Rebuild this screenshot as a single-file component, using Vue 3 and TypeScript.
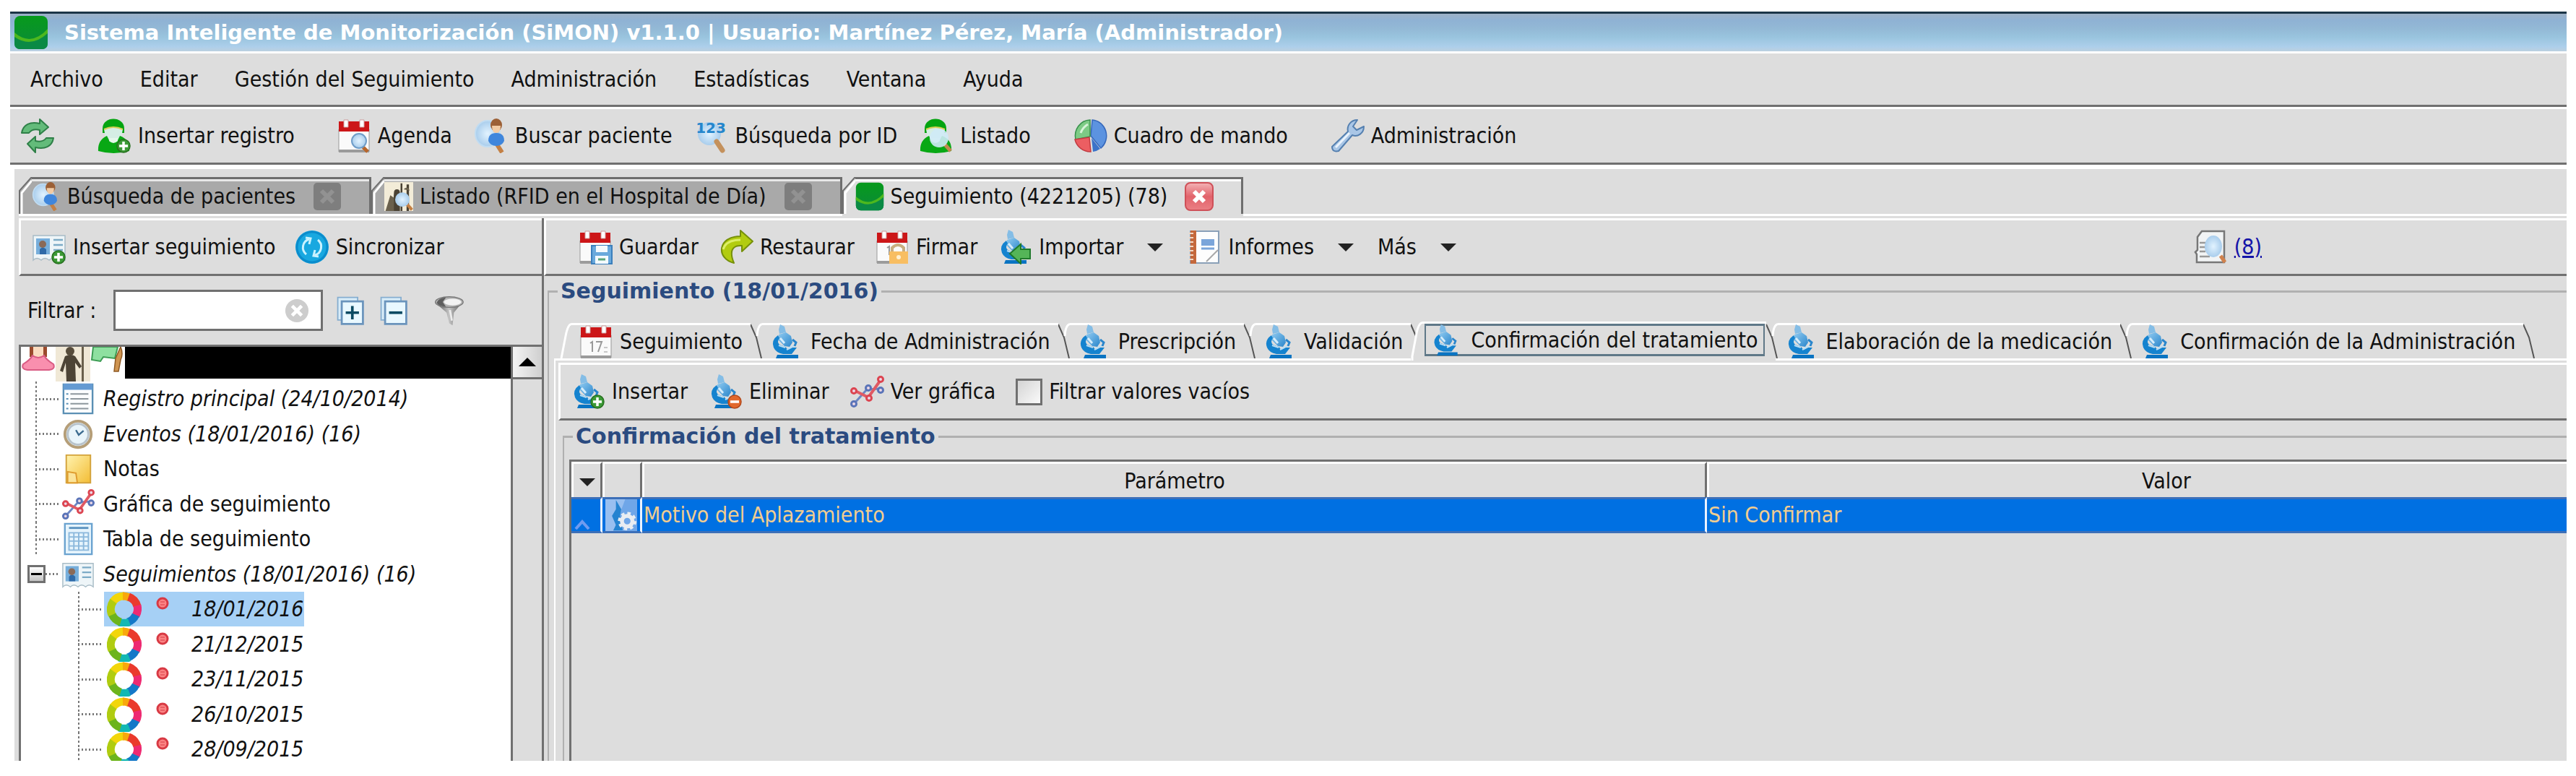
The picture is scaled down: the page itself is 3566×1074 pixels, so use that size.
<script setup lang="ts">
import { ref } from 'vue'

interface Action {
  label?: string
  title?: string
  icons?: string[]
  menu?: boolean
  group?: boolean
}

const menus = ['Archivo', 'Editar', 'Gestión del Seguimiento', 'Administración', 'Estadísticas', 'Ventana', 'Ayuda']

const mainActions: Action[] = [
  { title: 'Actualizar', icons: ['refresh'] },
  { label: 'Insertar registro', icons: ['person', 'badge-plus'], group: true },
  { label: 'Agenda', icons: ['calendar', 'badge-lens'], group: true },
  { label: 'Buscar paciente', icons: ['find-user'] },
  { label: 'Búsqueda por ID', icons: ['find-id'] },
  { label: 'Listado', icons: ['person', 'badge-lens-big'] },
  { label: 'Cuadro de mando', icons: ['pie'], group: true },
  { label: 'Administración', icons: ['tools'], group: true },
]

const windowTabs = [
  { label: 'Búsqueda de pacientes', icon: 'find-user', active: false },
  { label: 'Listado (RFID en el Hospital de Día)', icon: 'people', active: false },
  { label: 'Seguimiento (4221205) (78)', icon: 'logo', active: true },
]

const followActions: Action[] = [
  { label: 'Guardar', icons: ['calendar', 'badge-disk'] },
  { label: 'Restaurar', icons: ['restore'] },
  { label: 'Firmar', icons: ['calendar', 'badge-sign'] },
  { label: 'Importar', icons: ['microscope', 'badge-import'], menu: true },
  { label: 'Informes', icons: ['report'], menu: true },
  { label: 'Más', menu: true },
]

const stepTabs = [
  { label: 'Seguimiento', icons: ['calendar', 'badge-day'] },
  { label: 'Fecha de Administración', icons: ['microscope'] },
  { label: 'Prescripción', icons: ['microscope'] },
  { label: 'Validación', icons: ['microscope'] },
  { label: 'Confirmación del tratamiento', icons: ['microscope'] },
  { label: 'Elaboración de la medicación', icons: ['microscope'] },
  { label: 'Confirmación de la Administración', icons: ['microscope'] },
]
const activeStep = 4

const treeItems = [
  { label: 'Registro principal (24/10/2014)', icon: 'list', italic: true },
  { label: 'Eventos (18/01/2016) (16)', icon: 'clock', italic: true },
  { label: 'Notas', icon: 'note', italic: false },
  { label: 'Gráfica de seguimiento', icon: 'chart', italic: false },
  { label: 'Tabla de seguimiento', icon: 'sheet', italic: false },
]
const dates = ['18/01/2016', '21/12/2015', '23/11/2015', '26/10/2015', '28/09/2015']
const selectedDate = ref(dates[0])

const filterText = ref('')
const hideEmpty = ref(false)
</script>

<template>
  <svg class="sprite" aria-hidden="true">
    <defs>
      <linearGradient id="g-logo" x1="0" y1="0" x2="0" y2="1">
        <stop offset="0" stop-color="#079a1c" /><stop offset="1" stop-color="#0b8a3a" />
      </linearGradient>
      <linearGradient id="g-scope" x1="0" y1="0" x2="1" y2="1">
        <stop offset="0" stop-color="#8fcaf0" /><stop offset="1" stop-color="#2a86cc" />
      </linearGradient>
      <linearGradient id="g-note" x1="0" y1="0" x2="1" y2="1">
        <stop offset="0" stop-color="#fff3b0" /><stop offset="1" stop-color="#f3bd35" />
      </linearGradient>
      <linearGradient id="g-funnel" x1="0" y1="0" x2="1" y2="0">
        <stop offset="0" stop-color="#4a4a4a" /><stop offset=".5" stop-color="#c4c4c4" /><stop offset="1" stop-color="#5c5c5c" />
      </linearGradient>
      <linearGradient id="g-close" x1="0" y1="0" x2="0" y2="1">
        <stop offset="0" stop-color="#f3b3b6" /><stop offset=".5" stop-color="#e2636b" /><stop offset="1" stop-color="#ea7f84" />
      </linearGradient>
      <radialGradient id="g-lens"><stop offset="0" stop-color="#e2f3ff" /><stop offset="1" stop-color="#a9cdec" /></radialGradient>
    </defs>

    <symbol id="logo" viewBox="0 0 48 48">
      <rect x="1" y="1" width="46" height="46" rx="8" fill="url(#g-logo)" />
      <path d="M1 26Q24 44 47 20V39q0 8-8 8H9q-8 0-8-8z" fill="#0a8a45" />
      <path d="M1 24Q24 44 47 19V25Q24 46 1 30z" fill="#4db81e" />
    </symbol>
    <symbol id="refresh" viewBox="0 0 48 48">
      <g fill="#63bb7a" stroke="#2f8048" stroke-width="2" stroke-linejoin="round">
        <path d="M2 20C4 8 14 4 27 7V1l12 11-12 10v-6c-8-2-12 0-15 4z" />
        <path d="M46 27C44 39 34 43 21 40v7L10 35l11-10v6c8 2 12 0 15-4z" />
      </g>
    </symbol>
    <symbol id="person" viewBox="0 0 48 48">
      <path d="M8 14C8-4 38-4 38 14v6H8z" fill="#04a410" />
      <path d="M10 15q13-5 26 0l-2 10q-4 7-11 7t-11-7z" fill="#d5eee4" />
      <path d="M10 15q13-6 26 0" fill="none" stroke="#d8cf55" stroke-width="2" />
      <path d="M2 45Q1 30 14 24l4 8h10l4-8q14 5 13 21-22 6-43 0z" fill="#08a814" />
      <path d="M17 27h12v4q-6 6-12 0z" fill="#e4f7ea" />
    </symbol>
    <symbol id="badge-plus" viewBox="0 0 48 48">
      <circle cx="37" cy="38" r="9" fill="#3c9a36" stroke="#27701f" stroke-width="1.5" />
      <path d="M31 38h12M37 32v12" stroke="#fff" stroke-width="3.5" />
    </symbol>
    <symbol id="badge-minus" viewBox="0 0 48 48">
      <circle cx="37" cy="38" r="9" fill="#e2682c" stroke="#b3481a" stroke-width="1.5" />
      <path d="M31 38h12" stroke="#fff" stroke-width="3.5" />
    </symbol>
    <symbol id="badge-import" viewBox="0 0 48 48">
      <path d="M17 33l15-13v7h13v13H32v7z" fill="#55b558" stroke="#1f7a2b" stroke-width="2" />
    </symbol>
    <symbol id="badge-lens" viewBox="0 0 48 48">
      <path d="M35 38l8 8" stroke="#b8672c" stroke-width="5" />
      <circle cx="31" cy="31" r="10" fill="url(#g-lens)" stroke="#6f9dc8" stroke-width="2" />
    </symbol>
    <symbol id="badge-lens-big" viewBox="0 0 48 48">
      <path d="M36 36l8 9" stroke="#c08a50" stroke-width="5" />
      <circle cx="28" cy="27" r="13" fill="#cfeaf6" opacity=".9" />
    </symbol>
    <symbol id="calendar" viewBox="0 0 48 48">
      <path d="M3 15h42v31H3z" fill="#fafafa" stroke="#999" stroke-width="1" />
      <path d="M3 43h42v4H3z" fill="#9b9b9b" />
      <path d="M3 4h42v14H3z" fill="#cc1618" />
      <path d="M10 2h6v10h-6zM32 2h6v10h-6z" fill="#fff" stroke="#c99" stroke-width="1" />
    </symbol>
    <symbol id="badge-day" viewBox="0 0 48 48">
      <path d="M16 26l3-2v14M24 24h8l-5 14" fill="none" stroke="#999" stroke-width="2" />
      <path d="M35 32h5M35 38h5" stroke="#c8c8c8" stroke-width="2" />
    </symbol>
    <symbol id="badge-disk" viewBox="0 0 48 48">
      <path d="M19 22h28v25H19z" fill="#69a9dc" stroke="#3b7fbc" stroke-width="2" />
      <path d="M25 22h16v9H25zM24 36h18v11H24z" fill="#f4fafd" />
      <path d="M28 41h10" stroke="#5aa67c" stroke-width="3" />
    </symbol>
    <symbol id="badge-sign" viewBox="0 0 48 48">
      <path d="M17 25l3-2v12" fill="none" stroke="#999" stroke-width="2" />
      <path d="M24 30v-5q8-8 16 0v5" fill="none" stroke="#c9ae80" stroke-width="4" />
      <path d="M20 30h26v17H20z" fill="#f8be62" />
      <circle cx="33" cy="38" r="3" fill="#fff0d0" />
    </symbol>
    <symbol id="find-user" viewBox="0 0 48 48">
      <ellipse cx="19" cy="21" rx="17" ry="18" fill="url(#g-lens)" stroke="#c0dcf2" stroke-width="2" />
      <path d="M32 36l7 11" stroke="#c48044" stroke-width="6" />
      <ellipse cx="31" cy="9" rx="8" ry="9" fill="#9c6036" />
      <path d="M25 10h12q0 10-6 10t-6-10z" fill="#f2cba4" />
      <path d="M20 31q0-11 11-11t11 11q-3 7-11 7t-11-7z" fill="#3f86dc" />
    </symbol>
    <symbol id="find-id" viewBox="0 0 48 48">
      <circle cx="21" cy="21" r="16" fill="url(#g-lens)" />
      <path d="M31 32l8 12" stroke="#c4915c" stroke-width="7" stroke-linecap="round" />
    </symbol>
    <symbol id="pie" viewBox="0 0 48 48">
      <path d="M27 2a21 22 0 0 1 12 39L25 24z" fill="#5c93e0" stroke="#3668bb" stroke-width="1.5" />
      <path d="M24 25V2A21 22 0 0 0 4 29z" fill="#7dcb85" stroke="#36904a" stroke-width="1.5" />
      <path d="M3 29l20-3 2 20A22 22 0 0 1 3 29z" fill="#ec5e62" stroke="#c23c42" stroke-width="1.5" />
      <path d="M26 27l12 15a22 22 0 0 1-10 4z" fill="#3b73c9" />
      <path d="M11 20q3-8 10-12" fill="none" stroke="#d6f3d8" stroke-width="3" />
    </symbol>
    <symbol id="tools" viewBox="0 0 48 48">
      <path d="M25 18c-2-8 4-16 13-16l-6 9 5 5 10-5c0 10-9 15-16 12L12 45q-9 2-9-6z" fill="#a9c6e6" stroke="#5580b0" stroke-width="2" stroke-linejoin="round" />
      <path d="M27 20L8 40" stroke="#eaf3fc" stroke-width="3" />
    </symbol>
    <symbol id="people" viewBox="0 0 48 48">
      <path d="M0 0h48v48H0z" fill="#f3ecd8" />
      <path d="M16 18q0-6 5-6t5 6v30H14zM27 2h3v46h-3zM37 4h4v44h-4z" fill="#4a4234" />
      <path d="M2 48l8-26 6 4v22zM32 12q7-6 10 2" fill="#6a604c" />
      <path d="M37 36l9 10" stroke="#c48044" stroke-width="5" />
      <circle cx="30" cy="29" r="12" fill="url(#g-lens)" />
    </symbol>
    <symbol id="cane" viewBox="0 0 48 48">
      <path d="M0 0h48v48H0z" fill="#f0e8d6" />
      <circle cx="20" cy="6" r="6" fill="#574c3b" />
      <path d="M13 13q8-4 14 0l9 14-3 3-6-8 1 26H15l-1-26-4 13-4-2z" fill="#4d4436" />
      <path d="M36 0h3v48h-3z" fill="#6a604c" />
    </symbol>
    <symbol id="woman" viewBox="0 0 48 48">
      <path d="M12 0h24v14H12z" fill="#9b4a2c" />
      <path d="M17 0h14v16H17z" fill="#fadcc0" />
      <path d="M16 12q8 6 16 0 3 6 13 12 3 7-6 8H9q-9-1-6-8 10-6 13-12z" fill="#f98fae" stroke="#d95c84" stroke-width="2" />
    </symbol>
    <symbol id="flag" viewBox="0 0 48 48">
      <path d="M4 0h34l-4 16-16-2-4 6-12-2z" fill="#8ee0a0" stroke="#3c9c54" stroke-width="2" />
      <path d="M42 0q4 10 0 18l-3 16h-6l2-18z" fill="#cf9450" stroke="#8f5a24" stroke-width="1.5" />
    </symbol>
    <symbol id="id-card" viewBox="0 0 48 48">
      <path d="M2 8h44v34q-6-5-11 0-6-5-11 0-6-5-11 0-6-5-11 0z" fill="#eef5f8" stroke="#a8bcc6" stroke-width="1.5" />
      <path d="M6 12h19v22H6z" fill="#76aedb" />
      <path d="M11 34v-7q4-5 9 0v7z" fill="#2f6aa8" /><circle cx="15" cy="20" r="5" fill="#8a6a58" />
      <path d="M30 14h13M30 21h13M30 28h13" stroke="#7cabc6" stroke-width="2.5" />
    </symbol>
    <symbol id="sync" viewBox="0 0 48 48">
      <circle cx="24" cy="24" r="23" fill="#18a8e0" /><circle cx="24" cy="24" r="21" fill="none" stroke="#0b8ccc" stroke-width="3" />
      <g fill="none" stroke="#c9f2ff" stroke-width="3">
        <path d="M16 34A12 12 0 0 1 20 13M32 14a12 12 0 0 1-4 21" />
        <path d="M15 11l7 1-2 8M33 37l-7-1 2-8" />
      </g>
    </symbol>
    <symbol id="restore" viewBox="0 0 48 48">
      <path d="M30 1l17 15-15 14v-8c-13-1-18 7-11 24C-4 40-2 9 30 9z" fill="#b2cc10" stroke="#76900a" stroke-width="2" stroke-linejoin="round" />
      <path d="M6 27Q10 14 30 14" fill="none" stroke="#dcee68" stroke-width="3" />
    </symbol>
    <symbol id="microscope" viewBox="0 0 48 48">
      <path d="M15 0l6 3 2 8-9 2-1-6z" fill="#84bde6" />
      <path d="M13 14l10-3 7 5 2 9-4 6-7-1-8-8z" fill="url(#g-scope)" />
      <path d="M12 15Q2 22 6 32q3 7 13 9h12l7-9h-6l-6 3-4-4-8-3q-4-4 0-9z" fill="#1583cf" />
      <path d="M13 29l9 3M24 35l11-6" stroke="#b9def5" stroke-width="2" />
      <path d="M15 19l6 7" stroke="#d6edfb" stroke-width="3" />
      <path d="M32 21l5 4-2 5" fill="none" stroke="#2a86cc" stroke-width="3" />
      <path d="M11 42h29v5H9z" fill="#0a74c2" />
    </symbol>
    <symbol id="scope-gear" viewBox="0 0 48 48">
      <path d="M0 0h48v48H0z" fill="#6fa6e8" />
      <path d="M0 0h30L12 48H0z" fill="#a9cbf4" opacity=".7" />
      <path d="M16 1l8 14-2 10 4 22H12l4-8-6-14 6-10z" fill="#2483d0" />
      <circle cx="33" cy="33" r="8" fill="none" stroke="#e9edf2" stroke-width="6" />
      <circle cx="33" cy="33" r="12" fill="none" stroke="#e9edf2" stroke-width="4" stroke-dasharray="5 4.4" />
    </symbol>
    <symbol id="report" viewBox="0 0 48 48">
      <path d="M5 2h39v44H5z" fill="#fdfdfd" stroke="#8aa0b8" stroke-width="2" />
      <path d="M5 1h8v46H5z" fill="#c4683c" />
      <path d="M3 5h6M3 11h6M3 17h6M3 23h6M3 29h6M3 35h6M3 41h6" stroke="#f4d8c4" stroke-width="2" />
      <path d="M20 13h18v9H20z" fill="#7ba5da" /><path d="M20 26h18" stroke="#7ba5da" stroke-width="3" />
      <path d="M27 44l16-16" stroke="#a8a8a8" stroke-width="2" />
    </symbol>
    <symbol id="doc-lens" viewBox="0 0 48 48">
      <path d="M12 2h31v43H5V34l-2-3 3-3V10z" fill="#f2f4f5" stroke="#777" stroke-width="2.5" />
      <path d="M9 18h8M9 24h8M9 30h8M9 37h14" stroke="#999" stroke-width="2.5" />
      <path d="M38 36l6 9" stroke="#d0814c" stroke-width="5" />
      <ellipse cx="28" cy="23" rx="12" ry="15" fill="url(#g-lens)" />
    </symbol>
    <symbol id="plus-all" viewBox="0 0 48 48">
      <path d="M5 4h30v34H5z" fill="#d8ecf8" stroke="#86aed0" stroke-width="2" />
      <path d="M11 10h32v34H11z" fill="#e9f8ff" stroke="#6a94bc" stroke-width="3" />
      <path d="M17 27h20M27 17v20" stroke="#0a4a62" stroke-width="4" />
    </symbol>
    <symbol id="minus-all" viewBox="0 0 48 48">
      <path d="M5 4h30v34H5z" fill="#d8ecf8" stroke="#86aed0" stroke-width="2" />
      <path d="M11 10h32v34H11z" fill="#e9f8ff" stroke="#6a94bc" stroke-width="3" />
      <path d="M17 27h20" stroke="#0a4a62" stroke-width="4" />
    </symbol>
    <symbol id="funnel" viewBox="0 0 48 48">
      <path d="M4 12l17 15 4 16 5 3 2-19 13-16z" fill="url(#g-funnel)" />
      <ellipse cx="25" cy="11" rx="21" ry="8" fill="#b4b4b4" stroke="#777" stroke-width="1.5" />
      <path d="M6 12q2-7 14-8l-5 7 5 7Q8 17 6 12z" fill="#5e5e5e" />
      <ellipse cx="30" cy="11" rx="13" ry="5" fill="#f2f2f2" />
      <path d="M26 23l3 16" stroke="#ececec" stroke-width="3" />
    </symbol>
    <symbol id="list" viewBox="0 0 48 48">
      <path d="M3 3h42v42H3z" fill="#fbfdfe" stroke="#5a8fb4" stroke-width="2.5" />
      <path d="M3 2h42v9H3z" fill="#659bd2" />
      <path d="M13 17h26M13 24h26M13 31h26M13 38h26" stroke="#8d979d" stroke-width="2" />
      <path d="M7 17h3M7 24h3M7 31h3M7 38h3" stroke="#5a8fb4" stroke-width="2" />
    </symbol>
    <symbol id="clock" viewBox="0 0 48 48">
      <circle cx="24" cy="24" r="19" fill="#e9f5fb" stroke="#b59e78" stroke-width="4" />
      <circle cx="24" cy="24" r="15" fill="none" stroke="#b8c3cb" stroke-width="3" />
      <path d="M21 18l4 7 7-6" fill="none" stroke="#3c6c90" stroke-width="2.5" />
    </symbol>
    <symbol id="note" viewBox="0 0 48 48">
      <path d="M7 4h35v40H7z" fill="url(#g-note)" stroke="#d3a23c" stroke-width="2" />
      <path d="M9 28l12 2 2 14H9z" fill="#fbe49a" stroke="#de9a2c" stroke-width="2" />
    </symbol>
    <symbol id="chart" viewBox="0 0 48 48">
      <path d="M6 41L24 21l18-1" fill="none" stroke="#6c86c4" stroke-width="3" />
      <path d="M6 22l20 10L43 8" fill="none" stroke="#e05a64" stroke-width="4" />
      <g fill="#ecd8e6" stroke-width="3">
        <g stroke="#5a74b8"><circle cx="6" cy="41" r="3.5" /><circle cx="26" cy="19" r="3.5" /><circle cx="43" cy="22" r="3.5" /></g>
        <g stroke="#dc4450"><circle cx="6" cy="23" r="3.5" /><circle cx="27" cy="33" r="3.5" /><circle cx="43" cy="7" r="3.5" /></g>
      </g>
    </symbol>
    <symbol id="sheet" viewBox="0 0 48 48">
      <path d="M5 2h39v44H5z" fill="#e6f4fc" stroke="#6ba3d0" stroke-width="2.5" />
      <path d="M11 8h28" stroke="#5b93c0" stroke-width="3" />
      <path d="M11 15h28v25H11zM11 21h28M11 27h28M11 34h28M18 15v25M25 15v25M32 15v25" fill="none" stroke="#8bb8dc" stroke-width="2" />
    </symbol>
    <symbol id="ring" viewBox="0 0 48 48">
      <g fill="none" stroke-width="11">
        <path d="M8 14A19 19 0 0 1 24 6" stroke="#f2d60a" />
        <path d="M22 6a19 19 0 0 1 9 2" stroke="#f8a80c" />
        <path d="M30 7a19 19 0 0 1 12 13" stroke="#ea3a2c" />
        <path d="M42 19a19 19 0 0 1-2 14" stroke="#ee2a72" />
        <path d="M40 32a19 19 0 0 1-11 10" stroke="#1478c8" />
        <path d="M31 42a19 19 0 0 1-14 0" stroke="#12b8b4" />
        <path d="M19 42A19 19 0 0 1 7 31" stroke="#6cb41c" />
        <path d="M7 32A19 19 0 0 1 9 13" stroke="#b0cc10" />
      </g>
    </symbol>
    <symbol id="dot" viewBox="0 0 18 18">
      <circle cx="9" cy="9" r="7" fill="#fb8484" stroke="#d83a44" stroke-width="3" />
      <path d="M6 7h6M6 11h6" stroke="#d83a44" stroke-width="1" />
    </symbol>
    <symbol id="close-on" viewBox="0 0 40 40">
      <rect x="1" y="1" width="38" height="38" rx="7" fill="url(#g-close)" stroke="#cf5058" stroke-width="2" />
      <path d="M13 13l14 14M27 13L13 27" stroke="#fff" stroke-width="6" />
    </symbol>
    <symbol id="close-off" viewBox="0 0 40 40">
      <rect x="1" y="1" width="38" height="38" rx="5" fill="#7e7e7e" />
      <path d="M12 12l16 16M28 12L12 28" stroke="#929292" stroke-width="6" />
    </symbol>
    <symbol id="clear" viewBox="0 0 36 36">
      <circle cx="18" cy="18" r="17" fill="#cdcdcd" />
      <path d="M11 11l14 14M25 11L11 25" stroke="#fff" stroke-width="5" />
    </symbol>
  </svg>

  <div class="page">
    <header class="titlebar">
      <svg class="icon"><use href="#logo" /></svg>
      <h1>Sistema Inteligente de Monitorización (SiMON) v1.1.0 | Usuario: Martínez Pérez, María (Administrador)</h1>
    </header>

    <nav class="menubar">
      <button v-for="m in menus" :key="m" type="button">{{ m }}</button>
    </nav>

    <div class="toolbar main-tools">
      <button v-for="(a, i) in mainActions" :key="i" type="button" class="tool" :class="{ group: a.group }" :title="a.title">
        <svg class="icon" viewBox="0 0 48 48">
          <use v-for="n in a.icons" :key="n" :href="'#' + n" />
          <text v-if="a.icons?.includes('find-id')" class="digits" x="23" y="20" text-anchor="middle">123</text>
        </svg>
        <span v-if="a.label">{{ a.label }}</span>
      </button>
    </div>

    <main class="workspace">
      <div class="window-tabs">
        <div v-for="t in windowTabs" :key="t.label" class="window-tab" :class="{ active: t.active }">
          <svg class="corner" viewBox="0 0 18 51">
            <path class="corner-fill" d="M2 51V20L17 2h1v49z" />
            <path d="M4 51V22L18 5" fill="none" stroke="#fff" stroke-width="3" />
            <path d="M1 51V19L17 1h1" fill="none" stroke="#6e6e6e" stroke-width="2" />
          </svg>
          <div class="window-tab-body">
            <button type="button" class="window-tab-label">
              <svg class="icon small"><use :href="'#' + t.icon" /></svg>
              <span>{{ t.label }}</span>
            </button>
            <button type="button" class="close" aria-label="Cerrar">
              <svg class="icon small"><use :href="t.active ? '#close-on' : '#close-off'" /></svg>
            </button>
          </div>
        </div>
        <div class="window-tabs-rest"></div>
      </div>

      <div class="panes">
        <aside class="side">
          <div class="toolbar side-tools">
            <button type="button" class="tool">
              <svg class="icon"><use href="#id-card" /><use href="#badge-plus" /></svg>
              <span>Insertar seguimiento</span>
            </button>
            <button type="button" class="tool">
              <svg class="icon"><use href="#sync" /></svg>
              <span>Sincronizar</span>
            </button>
          </div>

          <div class="filter">
            <label for="filter">Filtrar :</label>
            <div class="filter-box">
              <input id="filter" v-model="filterText" type="text" />
              <button type="button" aria-label="Borrar filtro" @click="filterText = ''">
                <svg class="icon clear"><use href="#clear" /></svg>
              </button>
            </div>
            <button type="button" aria-label="Expandir todo"><svg class="icon mid"><use href="#plus-all" /></svg></button>
            <button type="button" aria-label="Contraer todo"><svg class="icon mid"><use href="#minus-all" /></svg></button>
            <button type="button" class="funnel" aria-label="Filtros"><svg class="icon mid"><use href="#funnel" /></svg></button>
          </div>

          <div class="tree-box">
            <div class="tree-view">
              <div class="patient">
                <svg class="icon"><use href="#woman" /></svg>
                <svg class="icon"><use href="#cane" /></svg>
                <svg class="icon"><use href="#flag" /></svg>
                <span class="redacted"></span>
              </div>
              <ul class="tree">
                <li v-for="n in treeItems" :key="n.label" class="branch">
                  <span class="guide"></span>
                  <svg class="icon node"><use :href="'#' + n.icon" /></svg>
                  <span :class="{ italic: n.italic }">{{ n.label }}</span>
                </li>
                <li class="branch open">
                  <button type="button" class="toggle" aria-label="Contraer"></button>
                  <span class="guide stub"></span>
                  <svg class="icon node"><use href="#id-card" /></svg>
                  <span class="italic">Seguimientos (18/01/2016) (16)</span>
                </li>
                <li v-for="d in dates" :key="d" class="leaf">
                  <span class="guide"></span>
                  <button type="button" class="date" :class="{ selected: d === selectedDate }" @click="selectedDate = d">
                    <svg class="icon"><use href="#ring" /></svg>
                    <svg class="icon dot"><use href="#dot" /></svg>
                    <span class="italic">{{ d }}</span>
                  </button>
                </li>
              </ul>
            </div>
            <div class="scrollbar">
              <button type="button" aria-label="Subir"><svg viewBox="0 0 24 12"><path d="M12 0l12 12H0z" /></svg></button>
            </div>
          </div>
        </aside>

        <section class="detail">
          <div class="toolbar detail-tools">
            <button v-for="a in followActions" :key="a.label" type="button" class="tool" :class="{ dropdown: a.menu }">
              <svg v-if="a.icons" class="icon"><use v-for="n in a.icons" :key="n" :href="'#' + n" /></svg>
              <span>{{ a.label }}</span>
              <svg v-if="a.menu" class="arrow" viewBox="0 0 22 11"><path d="M0 0h22L11 11z" /></svg>
            </button>
            <a href="#" class="attachments">
              <svg class="icon"><use href="#doc-lens" /></svg>
              <span>(8)</span>
            </a>
          </div>

          <fieldset class="frame">
            <legend>Seguimiento (18/01/2016)</legend>

            <div class="steps">
              <svg class="lead" viewBox="0 0 24 52">
                <path d="M10 49L16 18Q19 2 24 1.5" fill="none" stroke="#fff" stroke-width="3" />
                <path d="M0 50.5h24" stroke="#fff" stroke-width="3" />
              </svg>
              <template v-for="(s, i) in stepTabs" :key="s.label">
                <button type="button" class="step" :class="{ active: i === activeStep }">
                  <svg class="icon"><use v-for="n in s.icons" :key="n" :href="'#' + n" /></svg>
                  <span>{{ s.label }}</span>
                </button>
                <svg class="slant" viewBox="0 0 16 54">
                  <template v-if="i === activeStep - 1">
                    <path d="M0 4L7 20" stroke="#555" stroke-width="2" />
                    <path d="M2 54V48L8 16Q11 2 16 1.5" fill="none" stroke="#fff" stroke-width="3" />
                  </template>
                  <template v-else>
                    <path d="M0 4l8 18 7 29" fill="none" stroke="#555" stroke-width="2" />
                    <path v-if="i < stepTabs.length - 1" d="M9 20Q10 5 16 3.5" fill="none" stroke="#fff" stroke-width="3" />
                    <path :d="i === activeStep ? 'M13 52.5h3' : 'M0 52.5h16'" stroke="#fff" stroke-width="3" />
                  </template>
                </svg>
              </template>
              <div class="steps-rest"></div>
            </div>

            <div class="step-panel">
              <div class="toolbar param-tools">
                <button type="button" class="tool">
                  <svg class="icon"><use href="#microscope" /><use href="#badge-plus" /></svg>
                  <span>Insertar</span>
                </button>
                <button type="button" class="tool">
                  <svg class="icon"><use href="#microscope" /><use href="#badge-minus" /></svg>
                  <span>Eliminar</span>
                </button>
                <button type="button" class="tool">
                  <svg class="icon"><use href="#chart" /></svg>
                  <span>Ver gráfica</span>
                </button>
                <label class="check"><input v-model="hideEmpty" type="checkbox" /><span>Filtrar valores vacíos</span></label>
              </div>

              <fieldset class="frame inner">
                <legend>Confirmación del tratamiento</legend>
                <div class="grid">
                  <table>
                    <colgroup><col class="c-mark" /><col class="c-type" /><col class="c-name" /><col /></colgroup>
                    <thead>
                      <tr>
                        <th><svg class="arrow" viewBox="0 0 22 11"><path d="M0 0h22L11 11z" /></svg></th>
                        <th></th>
                        <th>Parámetro</th>
                        <th>Valor</th>
                      </tr>
                    </thead>
                    <tbody>
                      <tr>
                        <td class="mark"><svg viewBox="0 0 22 14"><path d="M2 13l9-10 9 10" fill="none" stroke="#6f9bf0" stroke-width="4" /></svg></td>
                        <td><svg class="icon"><use href="#scope-gear" /></svg></td>
                        <td>Motivo del Aplazamiento</td>
                        <td>Sin Confirmar</td>
                      </tr>
                    </tbody>
                  </table>
                </div>
              </fieldset>
            </div>
          </fieldset>
        </section>
      </div>
    </main>
  </div>
</template>

<style>
body {
  margin: 0;
  background: #fff;
}
</style>

<style scoped>
.sprite {
  position: absolute;
  width: 0;
  height: 0;
}
.page {
  box-sizing: border-box;
  height: 100vh;
  padding: 16px 13px 21px 14px;
  display: flex;
  flex-direction: column;
  overflow: hidden;
  font: 30px/36px 'DejaVu Sans Condensed', 'DejaVu Sans', sans-serif;
  color: #111;
  white-space: nowrap;
}
button,
input {
  font: inherit;
  color: inherit;
}
button {
  padding: 0;
  border: 0;
  background: none;
}
.icon {
  display: block;
  flex: none;
  width: 48px;
  height: 48px;
}
.icon.small {
  width: 40px;
  height: 40px;
}
.icon.mid {
  width: 44px;
  height: 44px;
}
.italic {
  font-style: italic;
}
.digits {
  font: bold 20px 'DejaVu Sans', sans-serif;
  fill: #2586cc;
}

.titlebar {
  flex: none;
  display: flex;
  align-items: center;
  gap: 22px;
  height: 52px;
  padding-left: 5px;
  border-top: 3px solid #1c3547;
  background: linear-gradient(#9db1c6, #8fb2d4 18%, #93b9d6 40%, #99c4de 62%, #adcfeb 88%, #bcd0df);
}
.titlebar h1 {
  margin: 0;
  font: bold 29px/36px 'DejaVu Sans', sans-serif;
  color: #fff;
}

.menubar {
  flex: none;
  display: flex;
  align-items: center;
  gap: 51px;
  height: 71px;
  padding-left: 28px;
  border-top: 3px solid #fff;
  border-bottom: 3px solid #707070;
  background: #ddd;
}

.toolbar {
  flex: none;
  display: flex;
  align-items: center;
  gap: 26px;
  height: 74px;
  border-top: 3px solid #fff;
  border-bottom: 3px solid #707070;
  background: #ddd;
}
.tool {
  display: flex;
  align-items: center;
  gap: 9px;
}
.tool.group {
  margin-left: 28px;
}
.main-tools {
  gap: 30px;
  padding-left: 14px;
}

.workspace {
  flex: 1;
  min-height: 0;
  display: flex;
  flex-direction: column;
  margin-left: 6px;
  border-top: 6px solid #fff;
  background: #ddd;
}
.window-tabs {
  flex: none;
  display: flex;
  padding: 11px 0 3px 6px;
}
.window-tab {
  display: flex;
  height: 51px;
  border-bottom: 3px solid #fff;
}
.window-tab.active {
  border-color: #ddd;
}
.corner {
  width: 18px;
  height: 51px;
}
.corner-fill {
  fill: #a9a9a9;
}
.active .corner-fill {
  fill: #ddd;
}
.window-tab-body {
  display: flex;
  align-items: center;
  gap: 24px;
  padding-right: 38px;
  border-top: 3px solid #6e6e6e;
  border-right: 3px solid #6e6e6e;
  box-shadow: inset 0 3px #e8e8e8;
  background: #a9a9a9;
}
.active .window-tab-body {
  background: #ddd;
  box-shadow: inset 0 3px #fff;
}
.window-tab-label {
  display: flex;
  align-items: center;
  gap: 9px;
}
.window-tabs-rest {
  flex: 1;
  border-bottom: 3px solid #fff;
}

.panes {
  flex: 1;
  min-height: 0;
  display: flex;
  padding-left: 6px;
}

.side {
  flex: none;
  width: 727px;
  display: flex;
  flex-direction: column;
  border-right: 3px solid #707070;
  box-sizing: border-box;
}
.side-tools {
  border-left: 3px solid #fff;
  padding-left: 15px;
}
.filter {
  flex: none;
  display: flex;
  align-items: center;
  height: 95px;
  padding-left: 12px;
  gap: 16px;
}
.filter label {
  margin-right: 8px;
}
.filter-box {
  display: flex;
  align-items: center;
  box-sizing: border-box;
  width: 290px;
  height: 57px;
  padding-right: 16px;
  border: 3px solid #707070;
  background: #fff;
}
.filter-box input {
  flex: 1;
  min-width: 0;
  border: 0;
  outline: 0;
  background: none;
}
.icon.clear {
  width: 34px;
  height: 34px;
}
.funnel {
  margin-left: 16px;
}

.tree-box {
  flex: 1;
  min-height: 0;
  display: flex;
  border-top: 3px solid #707070;
  border-left: 3px solid #707070;
}
.tree-view {
  flex: 1;
  overflow: hidden;
  background: #fff;
}
.patient {
  display: flex;
  height: 48px;
}
.redacted {
  flex: 1;
  height: 44px;
  background: #000;
}
.tree {
  margin: 0;
  padding: 0;
  list-style: none;
}
.tree li {
  display: flex;
  align-items: center;
  height: 48px;
}
.tree li:nth-child(even) {
  height: 49px;
}
.branch {
  padding-left: 20px;
}
.branch.open {
  padding-left: 9px;
}
.leaf {
  padding-left: 79px;
}
.guide {
  align-self: stretch;
  width: 34px;
  margin-right: 2px;
  background:
    repeating-linear-gradient(#777 0 3px, transparent 3px 6px) left / 2px 100% no-repeat,
    repeating-linear-gradient(90deg, #777 0 2px, transparent 2px 5px) center / 100% 3px no-repeat;
}
.guide.stub {
  width: 20px;
  background: repeating-linear-gradient(90deg, #777 0 2px, transparent 2px 5px) center / 100% 3px no-repeat;
}
.toggle {
  width: 25px;
  height: 25px;
  border: 3px solid #707070;
  background:
    linear-gradient(#000, #000) center / 15px 3px no-repeat,
    linear-gradient(#fff, #c4c4c4);
}
.icon.node {
  width: 46px;
  height: 46px;
  margin-right: 12px;
}
.date {
  display: flex;
  align-items: center;
  height: 48px;
  padding-left: 4px;
}
.date.selected {
  background: #a6d0f5;
}
.icon.dot {
  width: 18px;
  height: 18px;
  margin: 0 31px 16px 20px;
}

.scrollbar {
  flex: none;
  width: 40px;
  border-left: 3px solid #707070;
  background: #ddd;
}
.scrollbar button {
  display: flex;
  align-items: center;
  justify-content: center;
  width: 100%;
  height: 45px;
  border-bottom: 3px solid #707070;
  background: linear-gradient(90deg, #f4f4f4, #cfcfcf);
}
.scrollbar svg {
  width: 24px;
  height: 12px;
}

.detail {
  flex: 1;
  min-width: 0;
  display: flex;
  flex-direction: column;
}
.detail-tools {
  gap: 28px;
  padding-left: 44px;
  border-left: 3px solid #fff;
}
.arrow {
  width: 22px;
  height: 11px;
}
.arrow path {
  fill: #222;
}
.tool .arrow {
  margin-left: 24px;
}
.dropdown {
  margin-right: 5px;
}
.attachments {
  display: flex;
  align-items: center;
  gap: 9px;
  margin-left: auto;
  margin-right: 422px;
  color: #1414a8;
}

.frame {
  flex: 1;
  min-width: 0;
  min-height: 0;
  display: flex;
  flex-direction: column;
  margin: 3px 0 0 5px;
  padding: 24px 0 0 7px;
  border: solid #b0b0b0;
  border-width: 3px 0 0 2px;
}
.frame legend {
  margin-left: 5px;
  padding: 0 4px;
  font: bold 30px/36px 'DejaVu Sans', sans-serif;
  color: #2b4b80;
}

.steps {
  flex: none;
  display: flex;
  align-items: flex-end;
}
.lead {
  width: 24px;
  height: 52px;
}
.step {
  box-sizing: border-box;
  display: flex;
  align-items: center;
  gap: 9px;
  height: 52px;
  padding: 0 11px 0 10px;
  border-top: 3px solid #fff;
  border-bottom: 3px solid #fff;
}
.step.active {
  height: 54px;
  padding: 0 11px 0 3px;
  border-bottom: 6px solid #ddd;
  background:
    linear-gradient(#5f7888, #5f7888) 3px 0 / calc(100% - 5px) 3px no-repeat,
    linear-gradient(#5f7888, #5f7888) 3px 100% / calc(100% - 5px) 3px no-repeat,
    linear-gradient(#5f7888, #5f7888) 3px 0 / 2px 100% no-repeat,
    linear-gradient(#5f7888, #5f7888) calc(100% - 2px) 0 / 2px 100% no-repeat;
  background-clip: padding-box;
}
.step.active .icon {
  margin-left: 7px;
  height: 44px;
}
.slant {
  flex: none;
  width: 16px;
  height: 54px;
}
.steps-rest {
  flex: 1;
  border-bottom: 3px solid #fff;
}

.step-panel {
  flex: 1;
  min-height: 0;
  display: flex;
  flex-direction: column;
  padding: 3px 0 0 4px;
  border-left: 2px solid #fff;
}
.param-tools {
  gap: 28px;
  padding-left: 14px;
  border-left: 3px solid #fff;
}
.check {
  display: flex;
  align-items: center;
  gap: 9px;
}
.check input {
  appearance: none;
  width: 37px;
  height: 37px;
  margin: 0;
  border: 3px solid #707070;
  background: linear-gradient(135deg, #d4d4d4, #fafafa);
}
.check input:checked {
  background: #707070;
}

.inner {
  margin: 4px 0 0 6px;
  padding: 14px 0 0 7px;
}
.inner legend {
  margin-left: 5px;
}
.grid {
  flex: 1;
  overflow: hidden;
  border-top: 3px solid #707070;
  border-left: 3px solid #707070;
}
table {
  width: calc(100% + 82px);
  table-layout: fixed;
  border-collapse: separate;
  border-spacing: 0;
}
.c-mark {
  width: 43px;
}
.c-type {
  width: 55px;
}
.c-name {
  width: 1474px;
}
th {
  height: 46px;
  padding: 0;
  border-top: 3px solid #fff;
  border-left: 3px solid #fff;
  border-right: 3px solid #707070;
  font-weight: normal;
  line-height: 43px;
}
th .arrow {
  display: inline-block;
  vertical-align: middle;
}
td {
  height: 48px;
  padding: 0 0 0 2px;
  border-top: 3px solid #3c6fb8;
  border-bottom: 3px solid #3c6fb8;
  border-right: 3px solid #eaf2ff;
  box-sizing: border-box;
  background: #0070e2;
  color: #f1cd90;
  line-height: 42px;
}
td .icon {
  height: 44px;
}
.mark svg {
  display: block;
  width: 22px;
  height: 14px;
  margin: 26px 0 0 2px;
}
</style>
